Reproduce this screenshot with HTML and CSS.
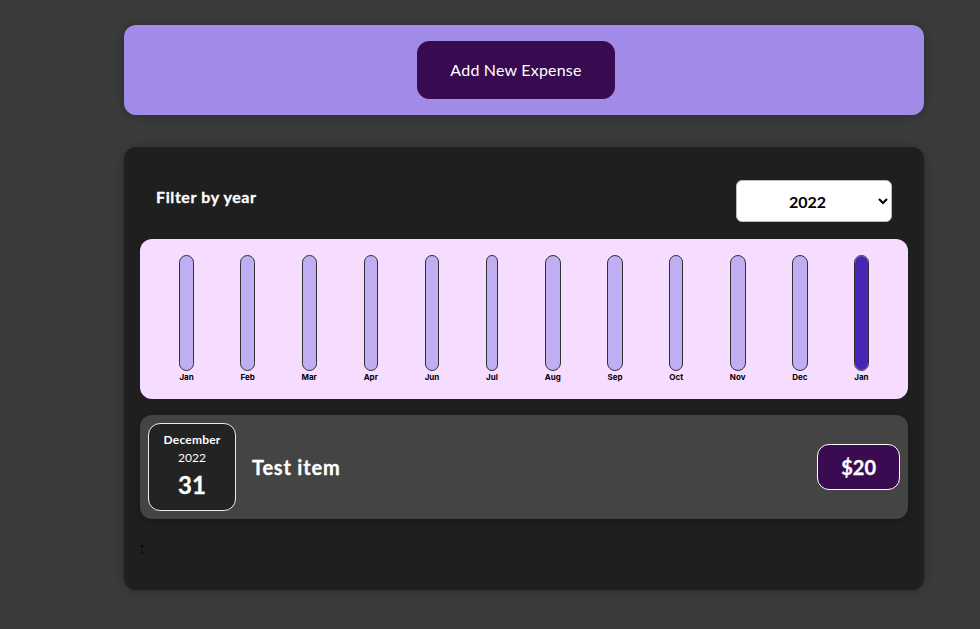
FILE: index.html
```html
<!DOCTYPE html>
<html lang="en">
<head>
<meta charset="utf-8">
<title>Expenses</title>
<link rel="stylesheet" href="styles.css">
</head>
<body>
<div class="new-expense">
  <button class="new-expense__btn">Add New Expense</button>
</div>

<div class="expenses">
  <div class="expenses-filter">
    <div class="expenses-filter__control">
      <label>Filter by year</label>
      <select>
        <option>2022</option>
        <option>2021</option>
        <option>2020</option>
        <option>2019</option>
      </select>
    </div>
  </div>

  <div class="chart">
    <div class="chart-bar"><div class="chart-bar__inner"><div class="chart-bar__fill" style="height:0%"></div></div><div class="chart-bar__label">Jan</div></div>
    <div class="chart-bar"><div class="chart-bar__inner"><div class="chart-bar__fill" style="height:0%"></div></div><div class="chart-bar__label">Feb</div></div>
    <div class="chart-bar"><div class="chart-bar__inner"><div class="chart-bar__fill" style="height:0%"></div></div><div class="chart-bar__label">Mar</div></div>
    <div class="chart-bar"><div class="chart-bar__inner"><div class="chart-bar__fill" style="height:0%"></div></div><div class="chart-bar__label">Apr</div></div>
    <div class="chart-bar"><div class="chart-bar__inner"><div class="chart-bar__fill" style="height:0%"></div></div><div class="chart-bar__label">Jun</div></div>
    <div class="chart-bar"><div class="chart-bar__inner"><div class="chart-bar__fill" style="height:0%"></div></div><div class="chart-bar__label">Jul</div></div>
    <div class="chart-bar"><div class="chart-bar__inner"><div class="chart-bar__fill" style="height:0%"></div></div><div class="chart-bar__label">Aug</div></div>
    <div class="chart-bar"><div class="chart-bar__inner"><div class="chart-bar__fill" style="height:0%"></div></div><div class="chart-bar__label">Sep</div></div>
    <div class="chart-bar"><div class="chart-bar__inner"><div class="chart-bar__fill" style="height:0%"></div></div><div class="chart-bar__label">Oct</div></div>
    <div class="chart-bar"><div class="chart-bar__inner"><div class="chart-bar__fill" style="height:0%"></div></div><div class="chart-bar__label">Nov</div></div>
    <div class="chart-bar"><div class="chart-bar__inner"><div class="chart-bar__fill" style="height:0%"></div></div><div class="chart-bar__label">Dec</div></div>
    <div class="chart-bar"><div class="chart-bar__inner"><div class="chart-bar__fill" style="height:100%"></div></div><div class="chart-bar__label">Jan</div></div>
  </div>

  <ul class="expenses-list">
    <li>
      <div class="expense-item">
        <div class="expense-date">
          <div class="expense-date__month">December</div>
          <div class="expense-date__year">2022</div>
          <div class="expense-date__day">31</div>
        </div>
        <div class="expense-item__description">
          <h2>Test item</h2>
          <div class="expense-item__price">$20</div>
        </div>
      </div>
    </li>
  </ul>
  <p class="stray">;</p>
</div>
</body>
</html>
```

FILE: styles.css
```css
* {
  box-sizing: border-box;
}

html {
  font-family: Lato, "Open Sans", sans-serif;
}

body {
  margin: 0;
  padding: 25px 0 0 124px;
  background-color: #3a3a3a;
  line-height: 1.5;
}

.new-expense {
  background-color: #a28ae8;
  padding: 16px;
  margin: 0 0 32px;
  width: 800px;
  border-radius: 12px;
  text-align: center;
  box-shadow: 0 1px 8px rgba(0, 0, 0, 0.25);
}

.new-expense__btn {
  font: inherit;
  font-size: 16px;
  line-height: 24px;
  letter-spacing: 0.2px;
  cursor: pointer;
  padding: 16px 32px;
  margin-right: 16px;
  border: 1px solid #380a4f;
  background-color: #380a4f;
  color: white;
  border-radius: 12px;
}

.expenses {
  padding: 16px;
  background-color: #1f1f1f;
  margin: 0 0 32px;
  width: 800px;
  border-radius: 12px;
  box-shadow: 0 1px 8px rgba(0, 0, 0, 0.25);
}

.expenses-filter {
  color: white;
  padding: 0 16px;
}

.expenses-filter__control {
  display: flex;
  width: 100%;
  height: 44px;
  align-items: center;
  justify-content: space-between;
  margin: 16px 0;
}

.expenses-filter label {
  font-weight: bold;
  font-size: 16px;
  letter-spacing: 0.6px;
  -webkit-text-stroke: 0.3px white;
  margin-bottom: 8px;
}

.expenses-filter select {
  font: inherit;
  font-size: 16px;
  height: 42px;
  padding: 8px 48px;
  font-weight: bold;
  border-radius: 6px;
  border: 1px solid #bbb;
  background-color: white;
  color: black;
}

.chart {
  padding: 16px;
  border-radius: 12px;
  background-color: #f6dcff;
  text-align: center;
  display: flex;
  justify-content: space-around;
  height: 160px;
}

.chart-bar {
  height: 100%;
  display: flex;
  flex-direction: column;
  align-items: center;
}

.chart-bar__inner {
  height: 100%;
  width: 100%;
  border: 1px solid #313131;
  border-radius: 12px;
  background-color: #bfaef1;
  overflow: hidden;
  display: flex;
  flex-direction: column;
  justify-content: flex-end;
}

.chart-bar__fill {
  background-color: #4626b2;
  width: 100%;
}

.chart-bar__label {
  font-family: Inter, "Liberation Sans", sans-serif;
  font-weight: bold;
  font-size: 8px;
  line-height: 12px;
  text-align: center;
  color: #000;
}

.expenses-list {
  list-style: none;
  padding: 0;
  margin: 16px 0;
}

.expense-item {
  display: flex;
  justify-content: space-between;
  align-items: center;
  box-shadow: 0 2px 8px rgba(0, 0, 0, 0.25);
  padding: 8px;
  border-radius: 12px;
  background-color: #444444;
}

.expense-date {
  display: flex;
  flex-direction: column;
  width: 88px;
  height: 88px;
  border: 1px solid #ececec;
  background-color: #232323;
  color: white;
  border-radius: 12px;
  align-items: center;
  justify-content: center;
}

.expense-date__month {
  font-size: 12px;
  line-height: 18px;
  font-weight: bold;
  letter-spacing: 0.2px;
}

.expense-date__year {
  font-size: 12px;
  line-height: 18px;
}

.expense-date__day {
  font-size: 24px;
  line-height: 36px;
  font-weight: bold;
  -webkit-text-stroke: 0.3px white;
}

.expense-item__description {
  display: flex;
  align-items: center;
  justify-content: flex-start;
  flex: 1;
}

.expense-item__description h2 {
  color: white;
  font-size: 20px;
  line-height: 30px;
  letter-spacing: 0.8px;
  -webkit-text-stroke: 0.3px white;
  flex: 1;
  margin: 0 16px;
}

.expense-item__price {
  font-size: 20px;
  line-height: 30px;
  font-weight: bold;
  -webkit-text-stroke: 0.3px white;
  color: white;
  background-color: #3b0b52;
  border: 1px solid white;
  padding: 7px 23px;
  border-radius: 12px;
}

.stray {
  margin: 0 0 15px;
  font-size: 16px;
  line-height: 24px;
  color: #000;
}
```
